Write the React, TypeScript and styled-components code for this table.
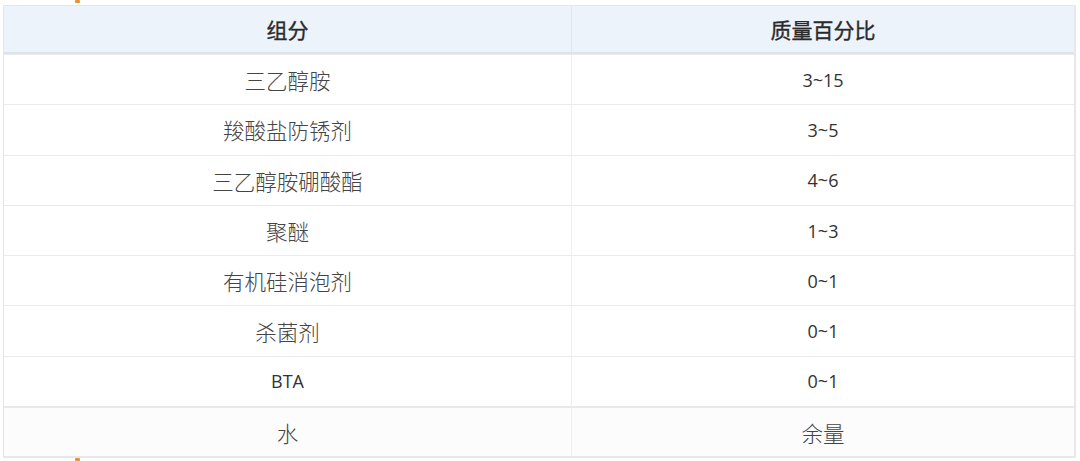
import styled, { createGlobalStyle } from 'styled-components'

const GlobalStyle = createGlobalStyle`
  html, body {
    margin: 0;
    padding: 0;
    background: #ffffff;
  }
  body {
    font-family: "Noto Sans", "Noto Sans CJK SC", sans-serif;
  }
`

const Page = styled.div`
  position: relative;
  width: 1080px;
  height: 461px;
  padding: 5px 4px 0 3px;
  box-sizing: border-box;
  overflow: hidden;
`

const Marker = styled.span<{ $bottom?: boolean }>`
  position: absolute;
  left: 75px;
  width: 5px;
  height: 3px;
  background: #e8913a;
  border-radius: 1px;
  ${(p) => (p.$bottom ? 'bottom: 0;' : 'top: 0;')}
`

const Table = styled.div`
  display: grid;
  grid-template-columns: 567px 1fr;
  grid-template-rows: 48px repeat(8, 50.3px);
  border: 1px solid #e3e7ec;
  border-right: 2px solid #e6e8eb;
  border-bottom: 2px solid #e6e8eb;
`

const HeadCell = styled.div`
  display: flex;
  align-items: center;
  justify-content: center;
  background: #edf3fb;
  color: #2a2a2a;
  font-family: "Noto Sans CJK SC", sans-serif;
  font-size: 21px;
  font-weight: 400;
  -webkit-text-stroke: 0.35px #2a2a2a;
  border-bottom: 2px solid #dde3ea;
  & + & {
    border-left: 1px solid #dfe6ee;
  }
`

const Cell = styled.div<{ $last?: boolean; $right?: boolean; $num?: boolean }>`
  display: flex;
  align-items: center;
  justify-content: center;
  background: ${(p) => (p.$last ? '#fcfcfc' : '#ffffff')};
  color: ${(p) => (p.$num ? '#333333' : '#444444')};
  font-size: ${(p) => (p.$num ? '18px' : '21.5px')};
  font-family: ${(p) =>
    p.$num ? '"Open Sans", "Noto Sans CJK SC", sans-serif' : '"Noto Sans CJK SC", sans-serif'};
  font-weight: ${(p) => (p.$num ? 400 : 300)};
  border-top: ${(p) => (p.$last ? '2px solid #e6e8eb' : '1px solid #e8eaed')};
  border-left: ${(p) => (p.$right ? '1px solid #eceef0' : 'none')};
`

const rows: [string, string][] = [
  ['三乙醇胺', '3~15'],
  ['羧酸盐防锈剂', '3~5'],
  ['三乙醇胺硼酸酯', '4~6'],
  ['聚醚', '1~3'],
  ['有机硅消泡剂', '0~1'],
  ['杀菌剂', '0~1'],
  ['BTA', '0~1'],
  ['水', '余量'],
]

const App = () => {
  return (
    <Page>
      <GlobalStyle />
      <Marker />
      <Table>
        <HeadCell>组分</HeadCell>
        <HeadCell>质量百分比</HeadCell>
        {rows.map(([name, pct], i) => {
          const last = i === rows.length - 1
          const isNum = /^[0-9~]+$/.test(pct)
          return [
            <Cell key={name} $last={last} $num={name === 'BTA'}>
              {name}
            </Cell>,
            <Cell key={name + '-p'} $last={last} $right $num={isNum}>
              {pct}
            </Cell>,
          ]
        })}
      </Table>
      <Marker $bottom />
    </Page>
  )
}

export default App
